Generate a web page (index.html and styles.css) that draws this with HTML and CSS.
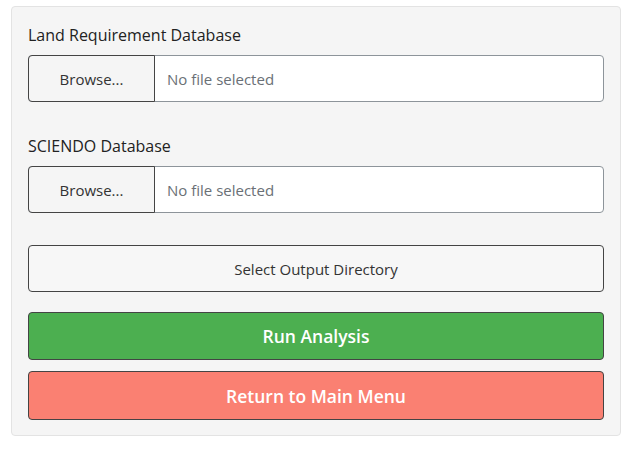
FILE: index.html
```html
<!DOCTYPE html>
<html>
<head>
<meta charset="utf-8">
<link rel="stylesheet" href="styles.css">
</head>
<body>
<div class="well">
  <div class="field">
    <label class="field-label">Land Requirement Database</label>
    <div class="file-group">
      <span class="browse">Browse...</span>
      <span class="file-name">No file selected</span>
    </div>
  </div>
  <div class="field">
    <label class="field-label">SCIENDO Database</label>
    <div class="file-group">
      <span class="browse">Browse...</span>
      <span class="file-name">No file selected</span>
    </div>
  </div>
  <button class="btn btn-outline">Select Output Directory</button>
  <button class="btn btn-run">Run Analysis</button>
  <button class="btn btn-return">Return to Main Menu</button>
</div>
</body>
</html>
```
FILE: styles.css
```css
* { box-sizing: border-box; }
html, body { margin: 0; padding: 0; background: #fff; }
body {
  font-family: "Open Sans", "Liberation Sans", sans-serif;
  color: #222;
  padding: 6px 14px 0 11px;
}
.well {
  background: #f5f5f5;
  border: 1px solid #e3e3e3;
  border-radius: 4px;
  padding: 16px 16px 15px 16px;
  display: flex;
  flex-direction: column;
}
.field { display: flex; flex-direction: column; margin-bottom: 32px; }
.field-label {
  font-size: 16px;
  line-height: 24px;
  margin-bottom: 8px;
  color: #222;
}
.file-group {
  display: flex;
  height: 47px;
  background: #fff;
  border: 1px solid #8d949a;
  border-radius: 4px;
}
.browse {
  width: 127px;
  margin: -1px 0 -1px -1px;
  border: 1px solid #444;
  border-radius: 4px 0 0 4px;
  background: #f5f5f5;
  display: flex;
  align-items: center;
  justify-content: center;
  font-size: 15px;
  color: #333;
}
.file-name {
  display: flex;
  align-items: center;
  padding-left: 12px;
  font-size: 15px;
  color: #6a7076;
}
.btn {
  font-family: inherit;
  border: 1px solid #444;
  border-radius: 4px;
  width: 100%;
  cursor: pointer;
  display: block;
}
.btn-outline {
  height: 47px;
  background: #f7f7f7;
  color: #333;
  font-size: 15px;
  margin-bottom: 20px;
}
.btn-run {
  height: 48px;
  background: #4caf50;
  color: #fff;
  font-size: 17.5px;
  font-weight: 600;
  margin-bottom: 11px;
}
.btn-return {
  height: 49px;
  background: #fa8072;
  color: #fff;
  font-size: 17.5px;
  font-weight: 600;
}
```
